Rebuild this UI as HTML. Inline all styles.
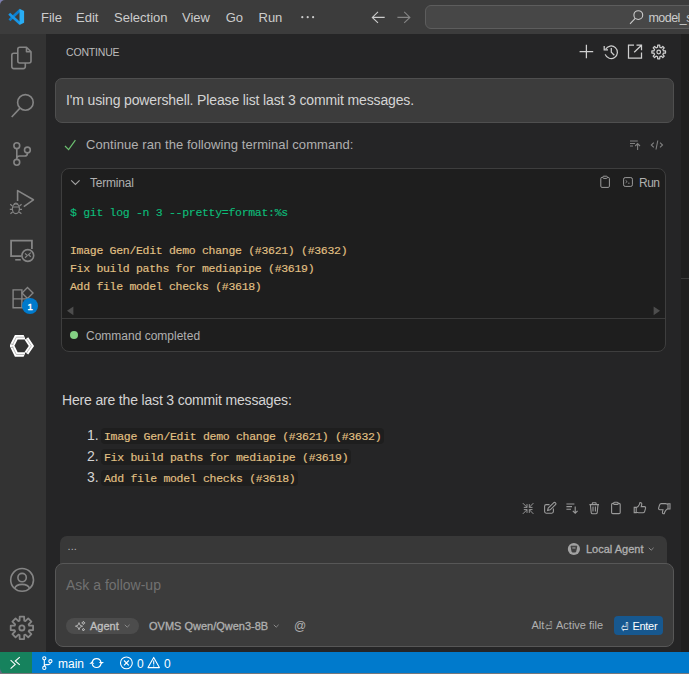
<!DOCTYPE html>
<html lang="en">
<head>
<meta charset="utf-8">
<title>Continue - Visual Studio Code</title>
<style>
*{box-sizing:border-box;margin:0;padding:0}
html,body{width:689px;height:674px;overflow:hidden;background:#252526}
body{position:relative;font-family:"Liberation Sans",sans-serif;color:#cccccc;font-size:13px}
.abs{position:absolute}
.t{position:absolute;white-space:nowrap;line-height:1}
#icons{position:absolute;left:0;top:0;width:689px;height:674px;overflow:visible;pointer-events:none}
/* title bar */
#corner{left:0;top:0;width:8px;height:8px;background:#7d7fae}
#title{left:0;top:0;width:689px;height:34px;background:#3c3c3c;border-top-left-radius:5px}
.menu{font-size:13px;color:#cccccc;top:11px}
#cc{left:425px;top:5px;width:280px;height:24px;background:#474747;border:1px solid #5d5d5d;border-radius:6px}
/* activity bar */
#act{left:0;top:34px;width:46px;height:618px;background:#333333}
#right{left:681px;top:34px;width:8px;height:618px;background:#1f1f1f}
/* status */
#status{left:0;top:652px;width:689px;height:22px;background:#007acc}
#remote{left:0;top:652px;width:32px;height:22px;background:#16825d;border-bottom-left-radius:6px}
#botline{left:0;top:673px;width:689px;height:1px;background:#77777a}
#bl{left:0;top:664px;width:10px;height:10px;background:#5c6a80}
.st{color:#ffffff;font-size:12px;top:657.5px}
/* chat */
#bubble{left:55px;top:78px;width:619px;height:45px;background:#3c3c3c;border:1px solid #4f4f4f;border-radius:7px}
#term{left:61px;top:168px;width:605px;height:184px;background:#1e1e1e;border:1px solid #3e3e3e;border-radius:8px}
#termdiv{left:62px;top:318px;width:603px;height:1px;background:#3a3a3a}
.code{font-family:"Liberation Mono",monospace;font-size:11.5px;letter-spacing:-0.3px;-webkit-text-stroke:0.15px currentColor}
.ar{-webkit-text-stroke:0.3px currentColor}
.ret{font-family:"DejaVu Sans","Liberation Sans",sans-serif}
.chip{position:absolute;height:16px;background:#1e1e1e;border-radius:4px}
.ui12{font-size:12px;color:#b0b0b0}
#strip{left:60px;top:536px;width:607px;height:30px;background:#383838;border-radius:7px 7px 0 0}
#input{left:55px;top:563px;width:619px;height:84px;background:#3c3c3c;border:1px solid #575757;border-radius:8px}
#pill{left:66px;top:618px;width:73px;height:16px;background:#4c4c4c;border-radius:8px}
#enter{left:614px;top:616px;width:49px;height:19px;background:#17588f;border-radius:4px}
</style>
</head>
<body>
<!-- TITLE BAR -->
<div id="corner" class="abs"></div>
<div id="title" class="abs"></div>
<div class="t menu" style="left:41px">File</div>
<div class="t menu" style="left:76px">Edit</div>
<div class="t menu" style="left:114px">Selection</div>
<div class="t menu" style="left:182px">View</div>
<div class="t menu" style="left:225.7px">Go</div>
<div class="t menu" style="left:258.5px">Run</div>
<div id="cc" class="abs"></div>
<div class="t" style="left:648.5px;top:11.8px;font-size:12.5px;letter-spacing:-0.55px;color:#cccccc">model_s</div>

<!-- ACTIVITY BAR -->
<div id="act" class="abs"></div>
<div id="right" class="abs"></div>
<div class="abs" style="left:681px;top:278px;width:8px;height:1px;background:#3b3b3b"></div>

<!-- STATUS BAR -->
<div id="status" class="abs"></div>
<div id="bl" class="abs"></div>
<div id="remote" class="abs"></div>
<div id="botline" class="abs"></div>
<div class="t st" style="left:58px">main</div>
<div class="t st" style="left:137px">0</div>
<div class="t st" style="left:164px">0</div>

<!-- PANEL HEADER -->
<div class="t" style="left:66px;top:47px;font-size:10.5px;letter-spacing:-0.18px;color:#bbbbbb">CONTINUE</div>

<!-- USER BUBBLE -->
<div id="bubble" class="abs"></div>
<div class="t" style="left:66px;top:93px;font-size:14px;color:#d4d4d4;letter-spacing:-0.14px">I'm using powershell. Please list last 3 commit messages.</div>

<!-- TOOL CALL -->
<div class="t" style="left:86px;top:138px;font-size:13px;color:#b0b0b0;letter-spacing:0.07px">Continue ran the following terminal command:</div>
<div id="term" class="abs"></div>
<div id="termdiv" class="abs"></div>
<div class="t ui12" style="left:90px;top:177px;letter-spacing:-0.2px">Terminal</div>
<div class="t ui12" style="left:639px;top:177px;letter-spacing:-0.5px">Run</div>
<div class="t code" style="left:70px;top:207px;color:#0dbc79">$ git log -n 3 --pretty=format:%s</div>
<div class="t code" style="left:70px;top:245px;color:#e2c184">Image Gen/Edit demo change (#3621) (#3632)</div>
<div class="t code" style="left:70px;top:263px;color:#e2c184">Fix build paths for mediapipe (#3619)</div>
<div class="t code" style="left:70px;top:281px;color:#e2c184">Add file model checks (#3618)</div>
<div class="t ui12" style="left:86px;top:330px">Command completed</div>

<!-- ANSWER -->
<div class="t" style="left:62px;top:393px;font-size:14px;color:#d4d4d4;letter-spacing:-0.17px">Here are the last 3 commit messages:</div>
<div class="chip" style="left:101px;top:428px;width:283px"></div>
<div class="chip" style="left:101px;top:449px;width:250px"></div>
<div class="chip" style="left:101px;top:470px;width:197px"></div>
<div class="t" style="left:87px;top:427.8px;font-size:14px;color:#d4d4d4">1.</div>
<div class="t" style="left:87px;top:448.8px;font-size:14px;color:#d4d4d4">2.</div>
<div class="t" style="left:87px;top:469.8px;font-size:14px;color:#d4d4d4">3.</div>
<div class="t code" style="left:104px;top:431px;color:#e2c184">Image Gen/Edit demo change (#3621) (#3632)</div>
<div class="t code" style="left:104px;top:452px;color:#e2c184">Fix build paths for mediapipe (#3619)</div>
<div class="t code" style="left:104px;top:473px;color:#e2c184">Add file model checks (#3618)</div>

<!-- INPUT -->
<div id="strip" class="abs"></div>
<div class="t ar" style="left:586px;top:543.7px;font-size:11px;color:#b0b0b0">Local Agent</div>
<div class="t" style="left:67.5px;top:541px;font-size:11px;color:#b0b0b0;letter-spacing:0.1px">...</div>
<div id="input" class="abs"></div>
<div class="t" style="left:66px;top:578px;font-size:14px;color:#717171">Ask a follow-up</div>
<div id="pill" class="abs"></div>
<div class="t ar" style="left:90px;top:621px;font-size:11px;color:#c0c0c0">Agent</div>
<div class="t ar" style="left:149px;top:621px;font-size:11px;color:#b0b0b0">OVMS Qwen/Qwen3-8B</div>
<div class="t" style="left:294px;top:620px;font-size:12px;color:#b0b0b0">@</div>
<div class="t" style="left:531.5px;top:620px;font-size:11px;color:#b0b0b0">Alt</div>
<div class="t ret" style="left:545.3px;top:619.8px;font-size:13px;transform:scaleX(0.68);transform-origin:0 0;color:#b0b0b0">⏎</div>
<div class="t" style="left:556px;top:620px;font-size:11px;color:#b0b0b0">Active file</div>
<div id="enter" class="abs"></div>
<div class="t ret" style="left:620.6px;top:620.7px;font-size:13px;transform:scaleX(0.68);transform-origin:0 0;color:#ffffff">⏎</div>
<div class="t" style="left:632.5px;top:621px;font-size:11px;letter-spacing:-0.3px;color:#ffffff">Enter</div>

<!-- ICONS -->
<svg id="icons" viewBox="0 0 689 674" fill="none" stroke-linecap="butt">
  <!-- vscode logo -->
  <path d="M9.4 20.2 20.2 10.1" stroke="#0b7fcf" stroke-width="2.7"/>
  <path d="M9.2 13.8 20.2 23.8" stroke="#1896e6" stroke-width="2.7"/>
  <path d="M19.5 8.8 24.1 11V22.8L19.5 25Z" fill="#29adf4"/>
  <!-- menu ellipsis -->
  <g fill="#cccccc"><circle cx="302.3" cy="17.2" r="1.1"/><circle cx="307.7" cy="17.2" r="1.1"/><circle cx="313.1" cy="17.2" r="1.1"/></g>
  <!-- nav arrows -->
  <path d="M384.7 17.4H372.3M378 11.9 372.3 17.4 378 22.9" stroke="#cccccc" stroke-width="1.1"/>
  <path d="M397.4 17.4H409.9M404.2 11.9 409.9 17.4 404.2 22.9" stroke="#858585" stroke-width="1.1"/>
  <!-- search in command center -->
  <circle cx="638.3" cy="15.1" r="4.4" stroke="#cccccc" stroke-width="1.1"/>
  <path d="M635.2 18.4 630 23.8" stroke="#cccccc" stroke-width="1.1"/>

  <!-- ACTIVITY ICONS -->
  <g stroke="#858585" stroke-width="1.6" stroke-linejoin="round">
    <!-- files -->
    <path d="M26.5 47.2H19.8Q17.8 47.2 17.8 49.2V61Q17.8 63 19.8 63H29Q31 63 31 61V51.8ZM26.5 47.2V51.8H31"/>
    <path d="M17.8 53.2H13.8Q11.8 53.2 11.8 55.2V66.6Q11.8 68.6 13.8 68.6H23.3Q25.3 68.6 25.3 66.6V63"/>
    <!-- search -->
    <circle cx="25.4" cy="102.4" r="7.8"/>
    <path d="M20 108.1 11.7 117"/>
    <!-- source control -->
    <circle cx="16.8" cy="145.7" r="2.9"/><circle cx="16.8" cy="162.3" r="2.9"/><circle cx="27.4" cy="150" r="2.9"/>
    <path d="M16.8 148.6V159.4M27.4 152.9V153.4Q27.4 156 24.6 156H19.6Q16.8 156 16.8 158.6"/>
    <!-- debug -->
    <path d="M17.6 201V190.6L33.4 199.8 23.8 206.6"/>
  </g>
  <g stroke="#858585" stroke-width="1.2">
    <ellipse cx="15.9" cy="208.8" rx="3.5" ry="4.8"/>
    <path d="M12.6 207H19.2M12.4 206 10.2 204.3M19.4 206 21.6 204.3M12.2 209.3H9.8M19.6 209.3H22M12.6 212 10.4 213.8M19.2 212 21.4 213.8M13.6 204.6Q15.9 201.6 18.2 204.6"/>
  </g>
  <g stroke="#858585" stroke-width="1.4">
    <!-- remote explorer -->
    <path d="M21.5 256.1H11.1V240.7H31.9V249" stroke-width="1.8"/>
    <path d="M15.2 259.8H20.8" stroke-width="1.6"/>
    <circle cx="27.8" cy="255.5" r="5.9" stroke-width="1.6"/>
    <path d="M25 253.4 27.3 255.6 25 257.8M30.8 252.6 28.5 254.7 30.8 256.8" stroke-width="1.2"/>
    <!-- extensions -->
    <path d="M13.1 289.9H21.9V307.7H13.1ZM13.1 298.9H30.3V307.7H21.9"/>
    <path d="M27.5 287.5 33 293 27.5 298.5 22 293Z"/>
  </g>
  <circle cx="30" cy="306" r="8" fill="#007acc"/>
  <!-- continue logo -->
  <g stroke="#ffffff" stroke-width="4.4" stroke-linejoin="miter">
    <path d="M25 337.2H16.3L12 345.8 16.3 354.5H25"/>
  </g>
  <path d="M24 334 26.9 340.4M24 357.8 26.9 351.4" stroke="#333333" stroke-width="1.5"/>
  <path d="M26.4 338.6 31.4 345.9 26.4 353.2" stroke="#ffffff" stroke-width="4.4"/>
  <rect x="7" y="342" width="3" height="8" fill="#333333"/>
  <g stroke="#333333" stroke-width="0.8" opacity="0.42">
    <path d="M24.2 337.2H16.3L12.3 345.2M12.3 346.5 16.3 354.5H24.2M26.4 338.6 31.4 345.9 26.4 353.2"/>
    <path d="M10.3 343.9 13.4 344.4M10.3 347.6 13.4 347.2"/>
  </g>
  <!-- account -->
  <g stroke="#858585" stroke-width="1.6">
    <circle cx="22.1" cy="579.9" r="11.4"/>
    <circle cx="22.1" cy="577.6" r="4.2"/>
    <path d="M14.6 588.6Q15.8 584.4 22.1 584.4T29.6 588.6"/>
  </g>
  <!-- manage gear -->
  <path d="M19.55,620.67 L19.68,616.72 L24.12,616.72 L24.25,620.67 L25.35,621.13 L28.23,618.42 L31.38,621.57 L28.67,624.45 L29.13,625.55 L33.08,625.68 L33.08,630.12 L29.13,630.25 L28.67,631.35 L31.38,634.23 L28.23,637.38 L25.35,634.67 L24.25,635.13 L24.12,639.08 L19.68,639.08 L19.55,635.13 L18.45,634.67 L15.57,637.38 L12.42,634.23 L15.13,631.35 L14.67,630.25 L10.72,630.12 L10.72,625.68 L14.67,625.55 L15.13,624.45 L12.42,621.57 L15.57,618.42 L18.45,621.13Z" stroke="#858585" stroke-width="1.8" stroke-linejoin="round"/>
  <circle cx="21.9" cy="627.9" r="2.6" stroke="#858585" stroke-width="1.8"/>

  <!-- PANEL HEADER ICONS -->
  <g stroke="#cfcfcf" stroke-width="1.25">
    <path d="M579.6 51.5H593.2M586.4 44.7V58.3"/>
    <!-- history -->
    <path d="M605.6 49.2A6.3 6.3 0 1 1 605.2 54.4"/>
    <path d="M604.2 46V49.8H608M611.3 48V52.3L614.3 55.3"/>
    <!-- open external -->
    <path d="M634 45.2H628.5V58H641.5V52.5"/>
    <path d="M634.2 52.3 641.5 45.2M636.5 45.2H641.5V50.2"/>
    <!-- gear -->
    <path d="M657.59,47.23 L657.67,45.18 L659.73,45.18 L659.81,47.23 L661.29,47.84 L662.80,46.45 L664.25,47.90 L662.86,49.41 L663.47,50.89 L665.52,50.97 L665.52,53.03 L663.47,53.11 L662.86,54.59 L664.25,56.10 L662.80,57.55 L661.29,56.16 L659.81,56.77 L659.73,58.82 L657.67,58.82 L657.59,56.77 L656.11,56.16 L654.60,57.55 L653.15,56.10 L654.54,54.59 L653.93,53.11 L651.88,53.03 L651.88,50.97 L653.93,50.89 L654.54,49.41 L653.15,47.90 L654.60,46.45 L656.11,47.84Z" stroke-linejoin="round"/>
    <circle cx="658.7" cy="52" r="1.8"/>
  </g>

  <!-- check -->
  <path d="M65 146 68.6 149.6 75.4 140.2" stroke="#6cc070" stroke-width="1.2"/>
  <!-- bars arrow up / code -->
  <g stroke="#808080" stroke-width="1.1">
    <path d="M630 141H637.8M630 143.5H635M630 146H633M637.6 150V143.6M635.2 146 637.6 143.6 640 146"/>
    <path d="M653.8 142.6 651.3 145 653.8 147.4M657.8 140.5 656 149.5M660 142.6 662.5 145 660 147.4"/>
  </g>
  <!-- terminal header -->
  <path d="M71.2 180.4 75.4 184.5 79.6 180.4" stroke="#a4a4a4" stroke-width="1.1"/>
  <g stroke="#9a9a9a" stroke-width="1">
    <path d="M602.8 177.4H602Q600.8 177.4 600.8 178.6V186.2Q600.8 187.4 602 187.4H608.2Q609.4 187.4 609.4 186.2V178.6Q609.4 177.4 608.2 177.4H607.4"/>
    <rect x="602.8" y="176.2" width="4.6" height="2.2" rx="1"/>
    <rect x="623.6" y="177.6" width="8.8" height="8.8" rx="1.6"/>
    <path d="M625.6 180.4 627.2 181.6 625.6 182.8M628 183.2H629.6" stroke-width="0.8"/>
  </g>
  <!-- scroll arrows -->
  <path d="M73.4 306.4V315.2L67 310.8Z" fill="#4d4d4d"/>
  <path d="M653.6 306.4V315.2L660 310.8Z" fill="#4d4d4d"/>
  <circle cx="74" cy="335" r="4" fill="#84d084"/>

  <!-- ACTION ICONS -->
  <g stroke="#9a9a9a" stroke-width="1.1">
    <!-- arrows pointing in -->
    <path d="M522.8 503.1 527 507.3M527 504.1V507.4H523.8M533.4 503.1 529.3 507.3M529.3 504.1V507.4H532.5M522.8 513.9 527 509.7M527 512.9V509.6H523.8M533.4 513.9 529.3 509.7M529.3 512.9V509.6H532.5" stroke-width="0.95"/>
    <!-- pencil square -->
    <path d="M549.5 504.6H546.2Q544.6 504.6 544.6 506.2V511.6Q544.6 513.2 546.2 513.2H551.8Q553.4 513.2 553.4 511.6V508.4"/>
    <path d="M547.6 510.4 548.2 508 553.6 502.8Q554.6 502 555.5 502.9T555.5 504.7L550.2 509.8Z"/>
    <!-- bars arrow down -->
    <path d="M566.4 504H574.4M566.4 506.6H572M566.4 509.2H571M575.2 506.4V513.2M572.8 510.8 575.2 513.2 577.6 510.8"/>
    <!-- trash -->
    <path d="M589.4 504.6H599M592 504.4 592.6 502.8H595.8L596.4 504.4M590.4 504.8 591.2 512.6Q591.4 513.8 592.6 513.8H595.8Q597 513.8 597.2 512.6L598 504.8M593 506.6V511.6M595.4 506.6V511.6"/>
    <!-- clipboard -->
    <path d="M613.6 503.4H612.8Q611.6 503.4 611.6 504.6V512.4Q611.6 513.6 612.8 513.6H619Q620.2 513.6 620.2 512.4V504.6Q620.2 503.4 619 503.4H618.2"/>
    <rect x="613.6" y="502.2" width="4.6" height="2.2" rx="1"/>
    <!-- thumbs up -->
    <path d="M634.2 507.4H636.2V512.6H634.2ZM636.4 507.6Q638.6 506.6 639.4 504.4L640 502.6Q641.8 502.4 641.8 504.2L641.2 506.6H644.4Q645.8 506.8 645.6 508.2L644.6 511.6Q644.2 512.8 643 512.8H638.6L636.4 512.2"/>
    <!-- thumbs down -->
    <path d="M670 509H668V503.8H670ZM667.8 508.8Q665.6 509.8 664.8 512L664.2 513.8Q662.4 514 662.4 512.2L663 509.8H659.8Q658.4 509.6 658.6 508.2L659.6 504.8Q660 503.6 661.2 503.6H665.6L667.8 504.2"/>
  </g>

  <!-- strip -->
  <circle cx="573.9" cy="549" r="6.1" fill="#a2a2a2"/>
  <path d="M571 546.2H576.8L575.6 552H572.2Z" fill="#404040" stroke="#404040" stroke-width="1" stroke-linejoin="round"/>
  <rect x="572.3" y="547.2" width="3.2" height="1.5" fill="#a2a2a2" opacity="0.75"/>
  <path d="M648.8 547.8 651.2 550.2 653.6 547.8" stroke="#8a8a8a" stroke-width="1"/>
  <!-- pill -->
  <g stroke="#b8b8b8" stroke-width="0.9">
    <path d="M79 622.6 80 625.2 82.6 626.2 80 627.2 79 629.8 78 627.2 75.4 626.2 78 625.2Z"/>
    <path d="M83.4 621.2 83.9 622.4 85.1 622.9 83.9 623.4 83.4 624.6 82.9 623.4 81.7 622.9 82.9 622.4Z"/>
    <path d="M83.4 628.2 83.8 629.2 84.8 629.6 83.8 630 83.4 631 83 630 82 629.6 83 629.2Z"/>
  </g>
  <path d="M124.8 624.8 127.2 627.2 129.6 624.8" stroke="#8a8a8a" stroke-width="1"/>
  <path d="M273.8 624.8 276.2 627.2 278.6 624.8" stroke="#8a8a8a" stroke-width="1"/>
  <!-- STATUS ICONS -->
  <g stroke="#ffffff" stroke-width="1.1">
    <path d="M10.6 660.1 15.2 664.4 10.6 668.6M19.8 657.2 15.3 661 19.8 664.8"/>
    <circle cx="44.3" cy="658.3" r="1.6"/><circle cx="44.3" cy="667.9" r="1.6"/><circle cx="50.4" cy="661.2" r="1.6"/>
    <path d="M44.3 659.9V666.3M50.4 662.8Q50.4 664.6 48.4 664.6H46.2Q44.3 664.6 44.3 666.3"/>
    <!-- sync -->
    <path d="M92.3 662.3A4.4 4.4 0 0 1 100.9 662M100.9 663.8A4.4 4.4 0 0 1 92.3 664.2" stroke-width="1.2"/>
    <path d="M98.8 662H104L101.3 664.3ZM89.3 663.8H94.4L91.9 661.6Z" fill="#ffffff" stroke="none"/>
    <!-- error -->
    <circle cx="126.4" cy="662.9" r="5.9"/>
    <path d="M124 660.5 128.8 665.3M128.8 660.5 124 665.3"/>
    <!-- warning -->
    <path d="M153.7 657.4 159.4 667.6H148Z" stroke-linejoin="round"/>
    <path d="M153.7 660.6V664.6M153.7 665.4V666.6"/>
  </g>
</svg>
<div class="t" style="left:27.4px;top:301.6px;font-size:9.6px;color:#ffffff;-webkit-text-stroke:0.4px #ffffff">1</div>
</body>
</html>
